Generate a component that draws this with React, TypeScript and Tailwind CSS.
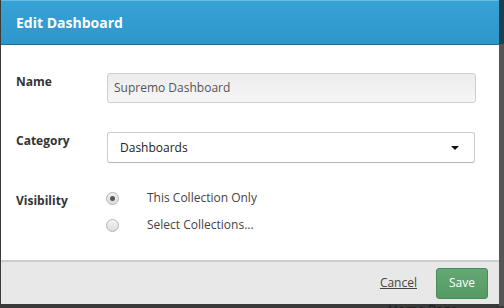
import React from "react";

export default function App() {
  return (
    <div
      className="relative w-[504px] h-[308px] overflow-hidden bg-[#3a3a3a]"
      style={{ fontFamily: '"Open Sans", "Noto Sans", sans-serif' }}
    >
      <div className="absolute right-0 top-0 w-[5px] h-[44px] bg-[#1d3f52]" />
      <div className="absolute right-0 top-[44px] w-[5px] h-[262px] bg-[#555555]" />
      <div className="absolute left-[388px] top-[301px] text-[13px] leading-[16px] text-[#1a1a1a]">Home Page</div>
      <div className="relative ml-[1px] w-[498px] h-[304px] flex flex-col bg-white">
        <div className="h-[45px] flex items-center px-[15px] bg-gradient-to-b from-[#36a2d6] to-[#2f96ca] border-b border-[#1f6f99] border-t border-t-[#6ab9e0]">
          <span className="text-white font-bold text-[14px] leading-none mt-[1px]">Edit Dashboard</span>
        </div>
        <div className="flex-1 flex flex-col pl-[15px] pr-[23px] pt-[28px]">
          <div className="flex items-start h-[30px]">
            <div className="w-[91px] text-[12px] font-bold text-[#333] pt-[0px]">Name</div>
            <div className="flex-1 h-[30px] rounded-[3px] border border-[#cfcfcf] bg-gradient-to-b from-[#ececec] to-[#f6f6f6] flex items-center px-[6px] text-[12px] text-[#555]">
              Supremo Dashboard
            </div>
          </div>
          <div className="flex items-start h-[31px] mt-[29px]">
            <div className="w-[91px] text-[12px] font-bold text-[#333] pt-[0px]">Category</div>
            <div className="flex-1 h-[31px] mr-[1px] rounded-[3px] border border-[#cccccc] border-b-[#b4b4b4] bg-white flex items-center pl-[12px] pr-[15px] text-[12px] text-[#222]">
              <span className="flex-1">Dashboards</span>
              <span className="w-0 h-0 border-l-[4px] border-r-[4px] border-t-[4px] border-l-transparent border-r-transparent border-t-[#111]" />
            </div>
          </div>
          <div className="flex items-start mt-[27px]">
            <div className="w-[91px] text-[12px] font-bold text-[#333] pt-[2px]">Visibility</div>
            <div className="flex flex-col gap-[11px]">
              <div className="flex items-center h-[16px]">
                <span className="w-[13px] h-[13px] rounded-full border border-[#b5b5b5] bg-gradient-to-b from-[#f0f0f0] to-[#dcdcdc] flex items-center justify-center ml-[-1px]">
                  <span className="w-[5px] h-[5px] rounded-full bg-[#555]" />
                </span>
                <span className="ml-[28px] text-[12px] text-[#444]">This Collection Only</span>
              </div>
              <div className="flex items-center h-[16px]">
                <span className="w-[13px] h-[13px] rounded-full border border-[#b5b5b5] bg-gradient-to-b from-[#f4f4f4] to-[#dcdcdc] ml-[-1px]" />
                <span className="ml-[28px] text-[12px] text-[#444]">Select Collections...</span>
              </div>
            </div>
          </div>
        </div>
        <div className="h-[44px] bg-[#e8e8e8] border-t-[2px] border-[#cccccc] flex items-center justify-end pr-[11px]">
          <span className="text-[12px] text-[#444] underline mr-[19px]">Cancel</span>
          <div className="w-[52px] h-[31px] rounded-[3px] bg-gradient-to-b from-[#64a874] to-[#559a65] border border-[#4b8a5a] flex items-center justify-center text-white text-[12px]">
            Save
          </div>
        </div>
      </div>
    </div>
  );
}
